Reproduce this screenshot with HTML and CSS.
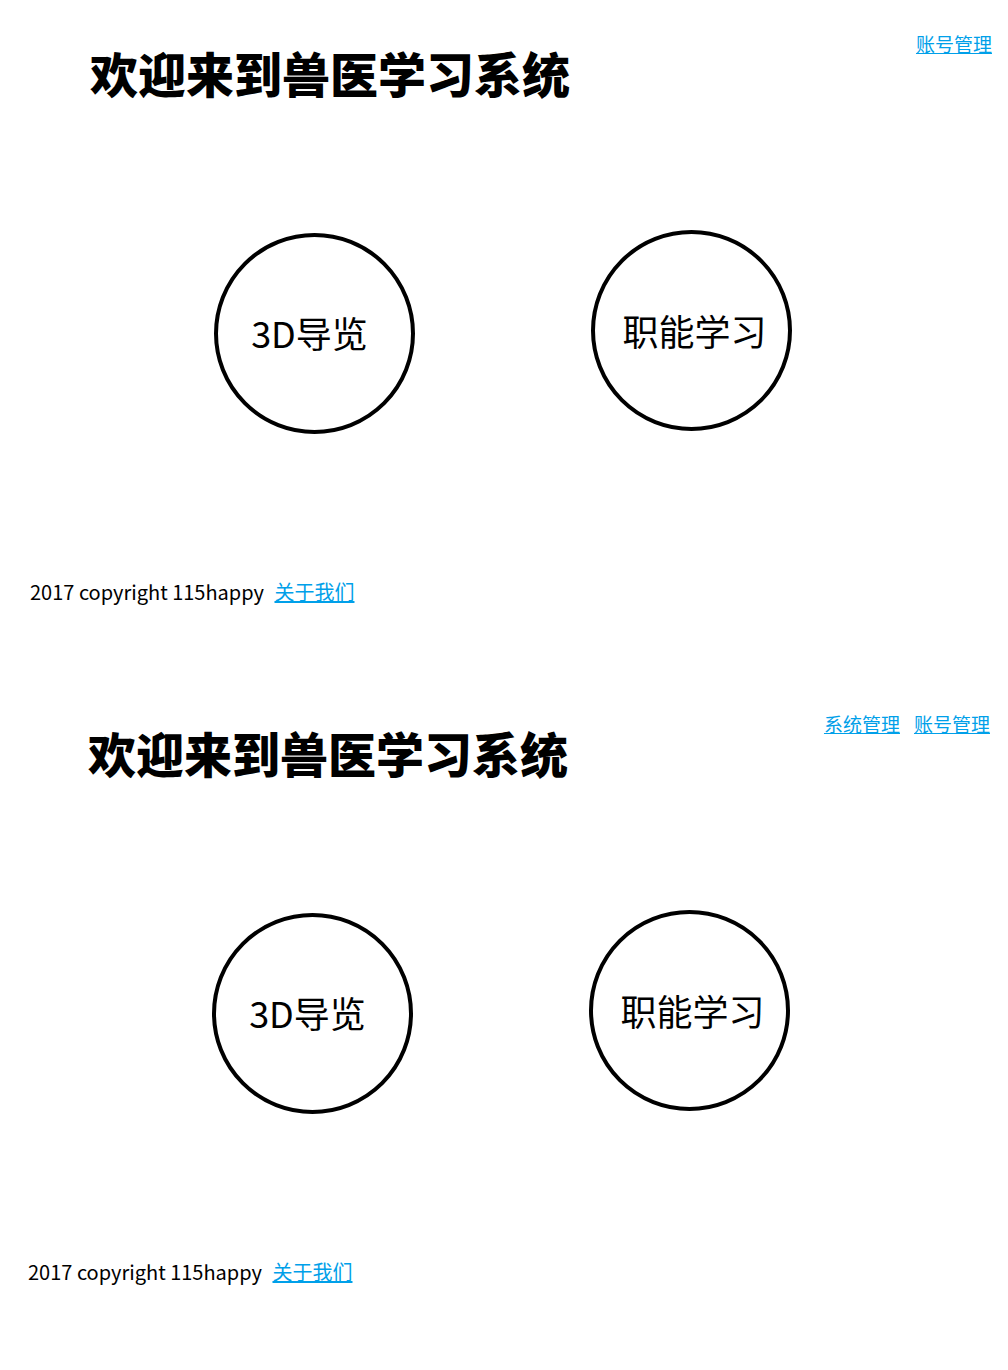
FILE: index.html
```html
<!DOCTYPE html>
<html lang="zh-CN">
  <head>
    <meta charset="UTF-8" />
    <title>兽医学习系统</title>
    <link rel="stylesheet" href="styles.css">
  </head>

  <body>
    <div class="page">
      <div class="header">
        <h1>欢迎来到兽医学习系统</h1>
        <div class="nav">
          <a href="#">账号管理</a>
        </div>
      </div>
      <div class="entries">
        <a class="entry entry-tour" href="#">3D导览</a>
        <a class="entry entry-study" href="#">职能学习</a>
      </div>
      <p class="footer">2017 copyright 115happy <a href="#">关于我们</a></p>
    </div>

    <div class="page page-admin">
      <div class="header">
        <h1>欢迎来到兽医学习系统</h1>
        <div class="nav">
          <a href="#">系统管理</a>
          <a href="#">账号管理</a>
        </div>
      </div>
      <div class="entries">
        <a class="entry entry-tour" href="#">3D导览</a>
        <a class="entry entry-study" href="#">职能学习</a>
      </div>
      <p class="footer">2017 copyright 115happy <a href="#">关于我们</a></p>
    </div>
  </body>
</html>
```

FILE: styles.css
```css
body {
  margin: 0;
  font-family: "Noto Sans CJK SC", "Noto Sans", sans-serif;
  color: rgb(0, 0, 0);
  background: rgb(255, 255, 255);
}

a {
  color: rgb(0, 160, 233);
}

.page {
  height: 680px;
  display: flex;
  flex-direction: column;
}

.page-admin {
  margin: 0 2px 0 -2px;
}

.header {
  display: flex;
  justify-content: space-between;
  align-items: flex-start;
}

h1 {
  margin: 48px 0 0 90px;
  font-size: 48px;
  font-weight: 900;
  line-height: 1;
  letter-spacing: 0;
}

.nav {
  display: flex;
  gap: 14px;
  margin: 32px 16px 0 0;
  font-size: 19px;
  line-height: 1.3;
}

.entries {
  display: flex;
  align-items: flex-start;
  gap: 176px;
  margin: 137px 0 0 214px;
}

.entry {
  box-sizing: border-box;
  width: 201px;
  height: 201px;
  border: 4px solid rgb(0, 0, 0);
  border-radius: 50%;
  display: flex;
  align-items: center;
  justify-content: center;
  color: rgb(0, 0, 0);
  text-decoration: none;
  font-size: 36px;
}

.entry-tour {
  padding: 0 10px 4px 0;
}

.entry-study {
  margin-top: -3px;
  padding: 0 0 2px 6px;
}

.footer {
  margin: 145px 0 0 30px;
  font-size: 20px;
  line-height: 1.3;
}

.footer a {
  margin-left: 6px;
}
```
